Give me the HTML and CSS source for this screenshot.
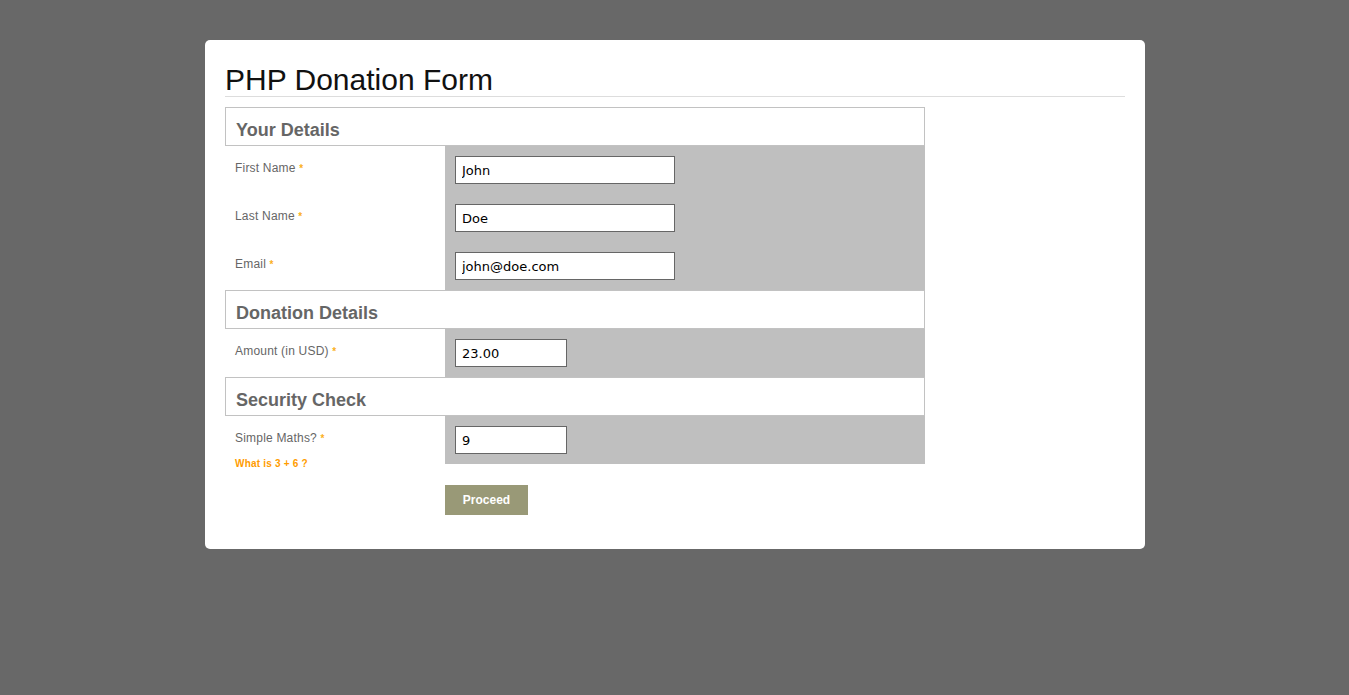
FILE: index.html
```html
<!DOCTYPE html>
<html>
<head>
<meta charset="utf-8">
<title>PHP Donation Form</title>
<link rel="stylesheet" href="styles.css">
</head>
<body>
<div class="card">
  <h1 class="title">PHP Donation Form</h1>
  <form class="form">
    <div class="section-head"><h2>Your Details</h2></div>
    <div class="row">
      <div class="label">First Name <span class="req">*</span></div>
      <div class="field"><input class="input" type="text" value="John"></div>
    </div>
    <div class="row">
      <div class="label">Last Name <span class="req">*</span></div>
      <div class="field"><input class="input" type="text" value="Doe"></div>
    </div>
    <div class="row">
      <div class="label">Email <span class="req">*</span></div>
      <div class="field"><input class="input" type="text" value="john@doe.com"></div>
    </div>

    <div class="section-head"><h2>Donation Details</h2></div>
    <div class="row">
      <div class="label">Amount (in USD) <span class="req">*</span></div>
      <div class="field"><input class="input input-short" type="text" value="23.00"></div>
    </div>

    <div class="section-head"><h2>Security Check</h2></div>
    <div class="row row-top">
      <div class="label">Simple Maths? <span class="req">*</span>
        <div class="hint">What is 3 + 6 ?</div>
      </div>
      <div class="field"><input class="input input-short" type="text" value="9"></div>
    </div>

    <div class="actions">
      <button class="btn" type="button">Proceed</button>
    </div>
  </form>
</div>
</body>
</html>
```
FILE: styles.css
```css
html, body {
  margin: 0;
  padding: 0;
}
body {
  background: #686868;
  font-family: "Liberation Sans", Arial, sans-serif;
  padding-top: 40px;
  height: 655px;
}
.card {
  width: 900px;
  margin: 0 auto;
  background: #fff;
  border-radius: 5px;
  padding: 24px 20px 34px 20px;
  position: relative;
  left: 0.5px;
}
.title {
  margin: 0;
  font-size: 30px;
  line-height: 32px;
  font-weight: normal;
  color: #111;
  border-bottom: 1px solid #dddddd;
}
.form {
  margin-top: 10px;
  width: 700px;
}
.section-head {
  border: 1px solid #c2c2c2;
  padding: 12px 10px 5px 10px;
}
.section-head h2 {
  margin: 0;
  font-size: 18px;
  line-height: 20px;
  font-weight: bold;
  color: #666;
}
.row {
  display: grid;
  grid-template-columns: 220px 480px;
}
.row-top {
  align-items: start;
}
.label {
  padding: 14px 10px 0 10px;
  font-size: 12px;
  letter-spacing: 0.2px;
  line-height: 16px;
  color: #666;
}
.req {
  color: #fbb01c;
  font-size: 10px;
  font-weight: bold;
}
.hint {
  margin-top: 11px;
  font-size: 10px;
  line-height: 12px;
  font-weight: bold;
  color: #ff9c00;
}
.field {
  background: #bfbfbf;
  padding: 10px;
}
.input {
  display: block;
  box-sizing: border-box;
  width: 220px;
  height: 28px;
  margin: 0;
  border: 1px solid #666;
  background: #fff;
  padding: 0 6px;
  font-family: "DejaVu Sans", Verdana, sans-serif;
  font-size: 13px;
  color: #000;
  outline: none;
}
.input-short {
  width: 112px;
}
.actions {
  padding-left: 220px;
  margin-top: 15px;
}
.btn {
  display: block;
  width: 83px;
  height: 30px;
  border: none;
  background: #999977;
  color: #fff;
  font-family: "Liberation Sans", Arial, sans-serif;
  font-size: 12px;
  font-weight: bold;
  padding: 0;
  margin: 0;
}
```
